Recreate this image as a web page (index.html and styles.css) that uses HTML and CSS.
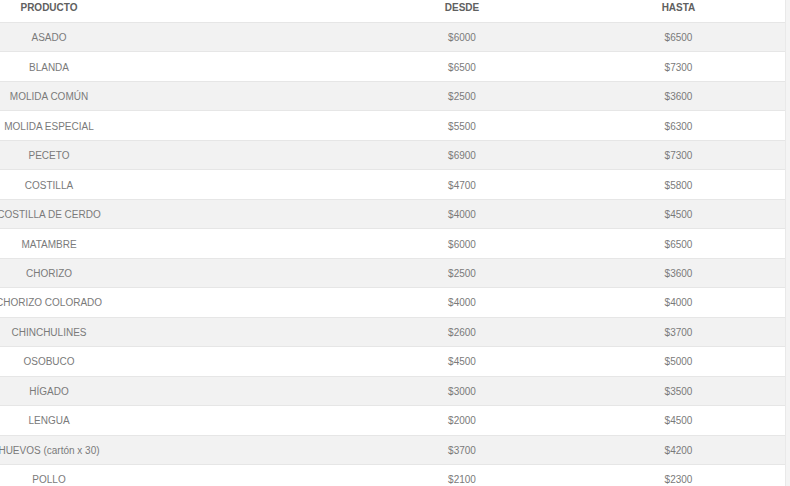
FILE: index.html
```html
<!DOCTYPE html>
<html lang="es">
<head>
<meta charset="utf-8">
<title>Precios</title>
<link rel="stylesheet" href="styles.css">
</head>
<body>
<div class="wrap">
  <div class="table">
    <div class="row head">
      <div class="cell c1"><span>PRODUCTO</span></div>
      <div class="cell">DESDE</div>
      <div class="cell">HASTA</div>
    </div>
    <div class="row odd"><div class="cell c1"><span>ASADO</span></div><div class="cell">$6000</div><div class="cell">$6500</div></div>
    <div class="row"><div class="cell c1"><span>BLANDA</span></div><div class="cell">$6500</div><div class="cell">$7300</div></div>
    <div class="row odd"><div class="cell c1"><span>MOLIDA COMÚN</span></div><div class="cell">$2500</div><div class="cell">$3600</div></div>
    <div class="row"><div class="cell c1"><span>MOLIDA ESPECIAL</span></div><div class="cell">$5500</div><div class="cell">$6300</div></div>
    <div class="row odd"><div class="cell c1"><span>PECETO</span></div><div class="cell">$6900</div><div class="cell">$7300</div></div>
    <div class="row"><div class="cell c1"><span>COSTILLA</span></div><div class="cell">$4700</div><div class="cell">$5800</div></div>
    <div class="row odd"><div class="cell c1"><span>COSTILLA DE CERDO</span></div><div class="cell">$4000</div><div class="cell">$4500</div></div>
    <div class="row"><div class="cell c1"><span>MATAMBRE</span></div><div class="cell">$6000</div><div class="cell">$6500</div></div>
    <div class="row odd"><div class="cell c1"><span>CHORIZO</span></div><div class="cell">$2500</div><div class="cell">$3600</div></div>
    <div class="row"><div class="cell c1"><span>CHORIZO COLORADO</span></div><div class="cell">$4000</div><div class="cell">$4000</div></div>
    <div class="row odd"><div class="cell c1"><span>CHINCHULINES</span></div><div class="cell">$2600</div><div class="cell">$3700</div></div>
    <div class="row"><div class="cell c1"><span>OSOBUCO</span></div><div class="cell">$4500</div><div class="cell">$5000</div></div>
    <div class="row odd"><div class="cell c1"><span>HÍGADO</span></div><div class="cell">$3000</div><div class="cell">$3500</div></div>
    <div class="row"><div class="cell c1"><span>LENGUA</span></div><div class="cell">$2000</div><div class="cell">$4500</div></div>
    <div class="row odd"><div class="cell c1"><span>HUEVOS (cartón x 30)</span></div><div class="cell">$3700</div><div class="cell">$4200</div></div>
    <div class="row"><div class="cell c1"><span>POLLO</span></div><div class="cell">$2100</div><div class="cell">$2300</div></div>
  </div>
</div>
</body>
</html>
```
FILE: styles.css
```css
html, body {
  margin: 0;
  padding: 0;
  background: #f4f4f4;
  overflow: hidden;
}
body {
  font-family: "Liberation Sans", Arial, sans-serif;
  font-size: 10px;
  color: #7a7a7a;
}
.wrap {
  width: 786px;
  background: #ffffff;
  border-right: 1px solid #e9e9e9;
  box-sizing: border-box;
}
.table {
  display: flex;
  flex-direction: column;
}
.row {
  display: grid;
  grid-template-columns: 352px 220px 1fr;
  height: 29.47px;
  box-sizing: border-box;
  padding-top: 2px;
  border-bottom: 1px solid #e6e6e6;
  align-items: center;
  background: #ffffff;
}
.row.odd {
  background: #f2f2f2;
}
.row.head {
  height: 23px;
  align-items: start;
  padding-top: 2px;
  color: #606060;
  font-weight: bold;
  background: #ffffff;
}
.cell {
  text-align: center;
  white-space: nowrap;
  line-height: 12px;
}
.c1 {
  display: flex;
  justify-content: center;
  padding-right: 254px;
  min-width: 0;
}
```
